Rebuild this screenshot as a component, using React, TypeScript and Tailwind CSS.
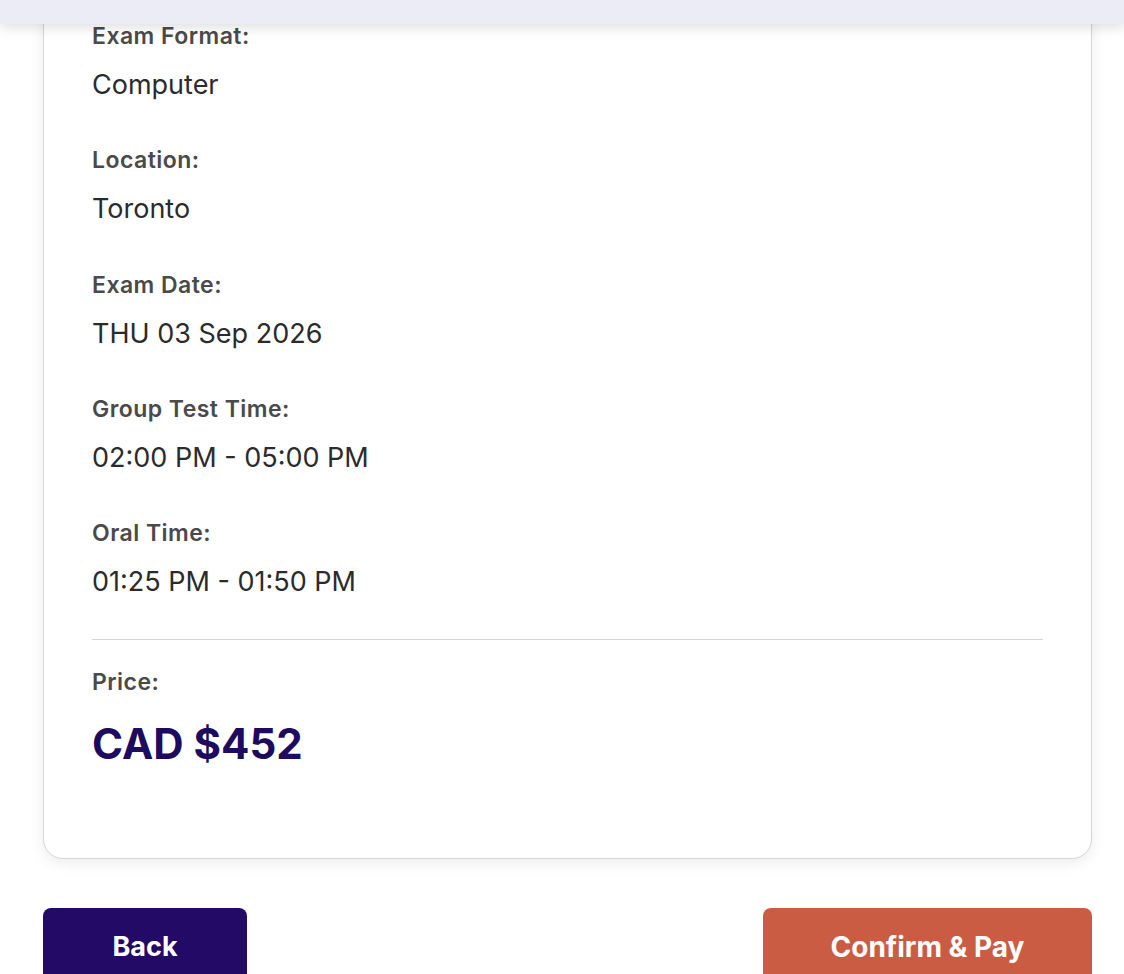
const rows = [
  { label: "Exam Format:", value: "Computer" },
  { label: "Location:", value: "Toronto" },
  { label: "Exam Date:", value: "THU 03 Sep 2026" },
  { label: "Group Test Time:", value: "02:00 PM - 05:00 PM" },
  { label: "Oral Time:", value: "01:25 PM - 01:50 PM" },
];

export default function App() {
  return (
    <div className="relative min-h-screen bg-white font-['Inter','Liberation_Sans',sans-serif]">
      <div className="fixed top-0 left-0 right-0 z-10 h-[24px] bg-[#ececf6] shadow-[0_4px_12px_rgba(0,0,0,0.12)]" />

      <div className="ml-[43px] mr-[32px] rounded-[20px] border border-[#d6d6d6] bg-white px-[48px] pt-[21px] pb-[89px] shadow-[0_4px_14px_rgba(0,0,0,0.08)]">
        {rows.map((r, i) => (
          <div key={r.label} className={i > 0 ? "mt-[45.25px]" : ""}>
            <p className="text-[23px] leading-[28px] font-semibold tracking-[0.02em] text-[#4a4a4a]">{r.label}</p>
            <p className="mt-[19px] text-[27px] leading-[32px] text-[#2b2b2b]">{r.value}</p>
          </div>
        ))}

        <div className="mt-[41px] border-t border-[#d4d4d4]" />

        <p className="mt-[28px] text-[23px] leading-[28px] font-semibold tracking-[0.02em] text-[#4a4a4a]">Price:</p>
        <p className="mt-[23px] text-[42px] leading-[50px] font-bold text-[#1e0a5e]">CAD $452</p>
      </div>

      <div className="ml-[43px] mr-[32px] mt-[49px] flex justify-between">
        <button className="h-[78px] w-[204px] rounded-[8px] bg-[#220a66] text-[27px] font-bold text-white">
          Back
        </button>
        <button className="h-[78px] w-[329px] rounded-[8px] bg-[#cb5c44] text-[28px] font-bold text-white">
          Confirm &amp; Pay
        </button>
      </div>
    </div>
  );
}
